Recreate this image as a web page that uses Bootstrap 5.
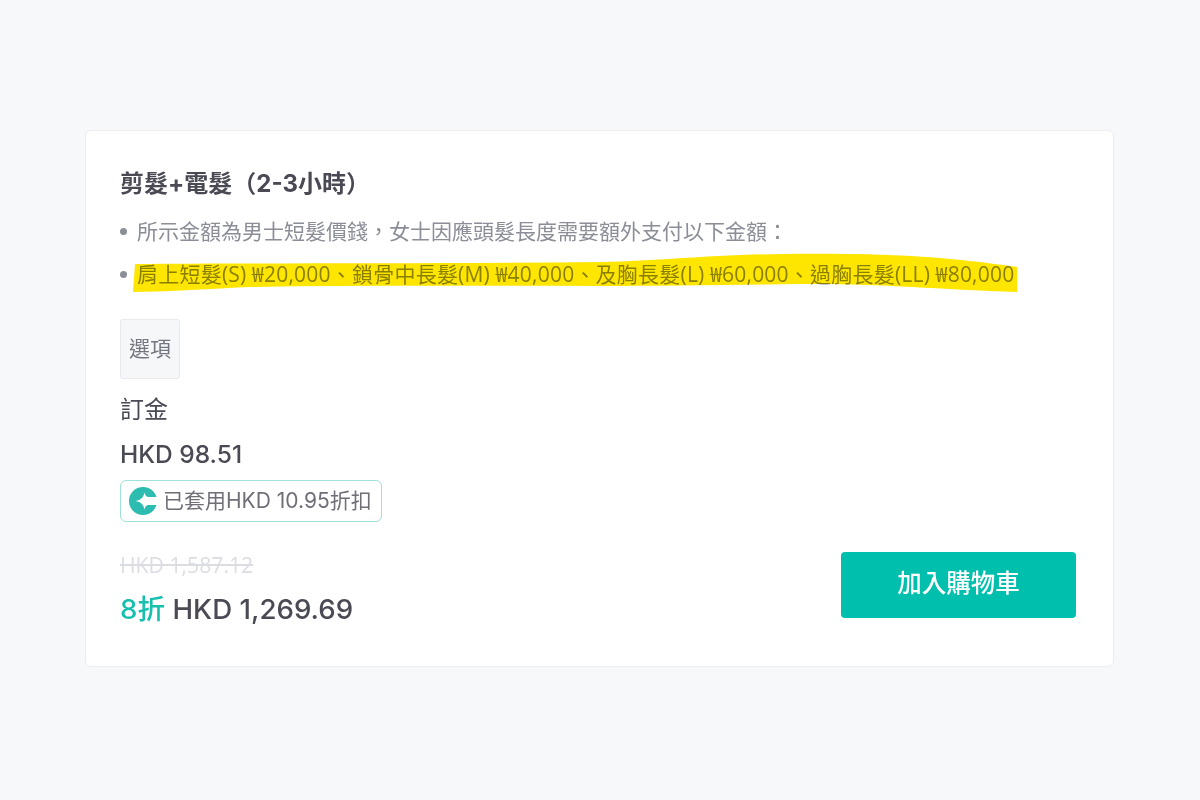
<!DOCTYPE html>
<html lang="zh-Hant">
  <head>
    <meta charset="UTF-8" />
    <title>剪髮+電髮</title>
    <link href="https://cdn.jsdelivr.net/npm/bootstrap@5.3.0/dist/css/bootstrap.min.css" rel="stylesheet" />
    <style>
      body {
        background-color: #f7f8fa;
        font-family: Inter, "Noto Sans CJK TC", sans-serif;
        color: #4a4a55;
      }
      .page-wrap {
        height: 800px;
        padding: 130px 86px 0 85px;
      }
      .item-card {
        height: 537px;
        border: 1px solid #ecedf1;
        border-radius: 6px;
        padding: 35px 37px 0 34px;
      }
      .item-title {
        font-size: 24px;
        font-weight: 700;
        line-height: 36px;
        color: #4a4a55;
        margin: 0 0 16px;
      }
      .note-line {
        position: relative;
        font-family: "Open Sans", "Noto Sans CJK TC", sans-serif;
        font-size: 21px;
        line-height: 27px;
        height: 27px;
        color: #8b8d97;
        margin-bottom: 16px;
        padding-left: 17px;
        white-space: nowrap;
      }
      .note-line::before {
        content: "";
        position: absolute;
        left: 0;
        top: 10px;
        width: 7px;
        height: 7px;
        border-radius: 50%;
        background: #8b8d97;
      }
      .note-marked {
        letter-spacing: 0.22px;
      }
      .marker-stroke {
        position: absolute;
        left: 13px;
        top: -8px;
        width: 886px;
        height: 44px;
        mix-blend-mode: multiply;
      }
      .option-box {
        width: 60px;
        height: 60px;
        margin-top: 31px;
        background: #f6f7f9;
        border: 1px solid #e9eaee;
        border-radius: 3px;
        font-size: 21px;
        color: #74767f;
      }
      .deposit-label {
        font-size: 24px;
        line-height: 30px;
        margin-top: 16px;
      }
      .deposit-price {
        font-size: 24.5px;
        line-height: 32px;
        font-weight: 500;
        margin-top: 13px;
      }
      .discount-tag {
        width: 262px;
        height: 42px;
        margin-top: 10px;
        column-gap: 6px;
        border: 1px solid #9fe0d8;
        border-radius: 6px;
        padding-left: 8px;
        font-size: 21px;
        color: #6f6f78;
        white-space: nowrap;
      }
      .old-price {
        font-family: "Open Sans", "Noto Sans CJK TC", sans-serif;
        font-size: 21.2px;
        line-height: 26px;
        color: #dcdde3;
        text-decoration: line-through;
      }
      .now-price {
        font-size: 27.7px;
        line-height: 36px;
        font-weight: 500;
        margin-top: 13px;
      }
      .now-price span {
        color: #16bfae;
      }
      .buy-row {
        margin-top: 30px;
      }
      .add-cart {
        width: 235px;
        height: 66px;
        padding-bottom: 10px;
        background: #00bfad;
        border: 0;
        border-radius: 4px;
        color: #fff;
        font-size: 24.5px;
        font-weight: 500;
      }
    </style>
  </head>
  <body>
    <div class="page-wrap">
      <div class="item-card bg-white">
        <h1 class="item-title">剪髮+電髮（2-3小時）</h1>
        <div class="note-line">所示金額為男士短髮價錢，女士因應頭髮長度需要額外支付以下金額：</div>
        <div class="note-line note-marked">
          肩上短髮(S) ₩20,000、鎖骨中長髮(M) ₩40,000、及胸長髮(L) ₩60,000、過胸長髮(LL) ₩80,000
          <svg class="marker-stroke" viewBox="0 0 886 44" preserveAspectRatio="none" aria-hidden="true">
            <path fill="#ffe600" d="M2 11 C120 10 300 11 467 9 C530 8 570 2 650 1 C720 0 780 2 817 6 C850 9 870 12 884 14 L884 39 C800 36 740 30 667 31 C600 32 530 33 467 33 C350 33 230 32 117 34 C70 36 30 39 0 39 Z" />
          </svg>
        </div>
        <div class="option-box d-flex align-items-center justify-content-center">選項</div>
        <div class="deposit-label">訂金</div>
        <div class="deposit-price">HKD 98.51</div>
        <div class="discount-tag d-flex align-items-center">
          <svg width="28" height="28" viewBox="0 0 28 28" aria-hidden="true">
            <circle cx="14" cy="14" r="14" fill="#2dbcb0" />
            <path fill="#fff" d="M28 10 H20 C17.5 10 16.5 9 15.5 5.5 C14.5 10 12.5 13 6.5 14 C12.5 15 14.5 18 15.5 22.5 C16.5 19 17.5 18 20 18 H28 Z" />
          </svg>
          <span>已套用HKD 10.95折扣</span>
        </div>
        <div class="buy-row d-flex justify-content-between align-items-start">
          <div>
            <div class="old-price">HKD 1,587.12</div>
            <div class="now-price"><span>8折</span> HKD 1,269.69</div>
          </div>
          <button type="button" class="btn add-cart">加入購物車</button>
        </div>
      </div>
    </div>
    <script src="https://cdn.jsdelivr.net/npm/bootstrap@5.3.0/dist/js/bootstrap.bundle.min.js"></script>
  </body>
</html>
